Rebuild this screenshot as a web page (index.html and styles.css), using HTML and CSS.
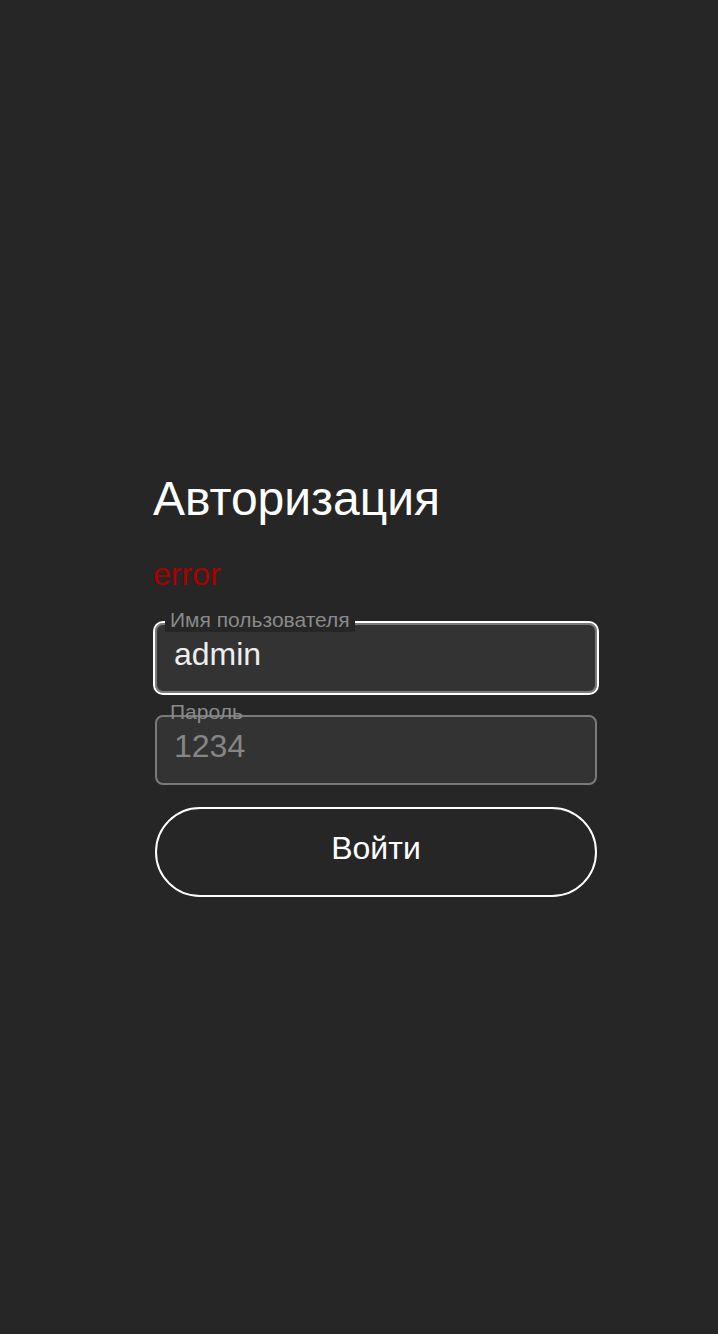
FILE: index.html
```html
<!DOCTYPE html>
<html lang="ru">
<head>
<meta charset="utf-8">
<title>Авторизация</title>
<link rel="stylesheet" href="styles.css">
</head>
<body>
<main class="page">
  <form class="login-form">
    <h1 class="title">Авторизация</h1>
    <p class="error">error</p>
    <div class="field">
      <input class="input input--focused" type="text" value="admin">
      <label class="field-label field-label--notched">Имя пользователя</label>
    </div>
    <div class="field">
      <input class="input" type="password" placeholder="1234">
      <label class="field-label">Пароль</label>
    </div>
    <button class="submit" type="button">Войти</button>
  </form>
</main>
</body>
</html>
```

FILE: styles.css
```css
html, body {
  margin: 0;
  padding: 0;
  background: #262626;
}

body {
  font-family: "Liberation Sans", Arial, sans-serif;
  color: #ffffff;
  min-height: 1334px;
}

.page {
  padding: 471px 0 0 153px;
}

.login-form {
  width: 446px;
  display: flex;
  flex-direction: column;
}

.title {
  margin: 0;
  font-size: 48px;
  line-height: 56px;
  font-weight: normal;
  color: #ffffff;
}

.error {
  margin: 29px 0 0;
  font-size: 32px;
  line-height: 37px;
  color: #aa0000;
}

.field {
  position: relative;
  margin: 30px 2px 0;
  width: 442px;
}

.field + .field {
  margin-top: 22px;
}

.input {
  display: block;
  box-sizing: border-box;
  width: 100%;
  height: 70px;
  margin: 0;
  padding: 0 17px 7px;
  border: 2px solid #7a7a7a;
  border-radius: 8px;
  background: #333333;
  color: #eeeeee;
  font-family: "Liberation Sans", Arial, sans-serif;
  font-size: 32px;
  outline: none;
}

.input::placeholder {
  color: #868686;
  opacity: 1;
}

.input--focused {
  outline: 2px solid #ffffff;
  outline-offset: 0;
}

.field-label {
  position: absolute;
  left: 10px;
  top: -15px;
  padding: 0 5px;
  font-size: 21px;
  line-height: 24px;
  color: #8a8a8a;
  white-space: nowrap;
}

.field-label--notched {
  background: #262626;
}

.submit {
  box-sizing: border-box;
  margin: 22px 2px 0;
  width: 442px;
  height: 90px;
  padding: 0 0 8px;
  border: 2px solid #ffffff;
  border-radius: 45px;
  background: transparent;
  color: #ffffff;
  font-family: "Liberation Sans", Arial, sans-serif;
  font-size: 32px;
  cursor: pointer;
}
```
